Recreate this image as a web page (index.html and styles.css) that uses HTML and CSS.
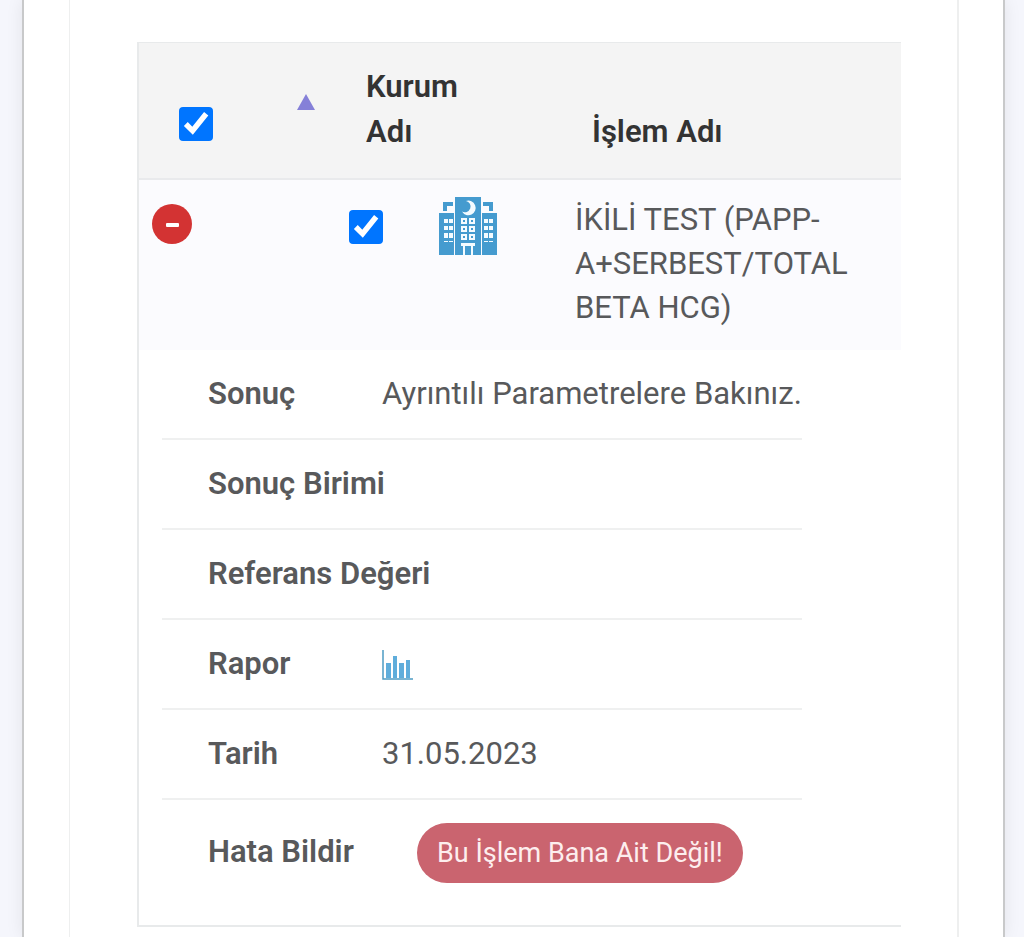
FILE: index.html
```html
<!DOCTYPE html>
<html lang="tr">
<head>
<meta charset="utf-8">
<meta name="viewport" content="width=device-width, initial-scale=1">
<title>Tahlil Sonuçları</title>
<link rel="stylesheet" href="styles.css">
</head>
<body>
<main class="card">
  <section class="panel">
    <table class="results">
      <colgroup>
        <col class="col-control">
        <col class="col-check">
        <col class="col-icon">
        <col>
      </colgroup>
      <thead>
        <tr>
          <th scope="col">
            <div class="select-all">
              <input class="check" type="checkbox" checked aria-label="Tümünü seç">
              <svg class="sort" viewBox="0 0 18 16" aria-hidden="true"><path d="M9 0 18 16H0Z"/></svg>
            </div>
          </th>
          <th scope="col" colspan="2" class="head-org">Kurum<br>Adı</th>
          <th scope="col" class="head-test">İşlem Adı</th>
        </tr>
      </thead>
      <tbody>
        <tr class="row">
          <td class="cell-control">
            <button class="collapse" type="button" aria-label="Detayı kapat">
              <svg viewBox="0 0 40 40" aria-hidden="true"><rect x="14" y="19" width="13" height="4" rx="1"/></svg>
            </button>
          </td>
          <td class="cell-check"><input class="check" type="checkbox" checked aria-label="İşlemi seç"></td>
          <td class="cell-icon">
            <svg class="hospital" viewBox="0 0 58 58" role="img" aria-label="Hastane">
              <path class="blue" d="M16 0H42V58H16ZM0 16H15V58H0ZM43 16H58V58H43ZM4 5H14V9H8V14H4ZM44 5H54V14H50V9H44Z"/>
              <path class="white" d="M27 4A7.300 7.300 0 1 1 23 14.500A5.700 5.700 0 1 0 27 4ZM22 46H36V49H34V58H32V49H26V58H24V49H22Z"/>
              <path class="white" d="M22 21h6v6h-6zM30 21h6v6h-6zM22 29h6v6h-6zM30 29h6v6h-6zM22 37h6v6h-6zM30 37h6v6h-6zM5 22h4v4h-4zM10 22h4v4h-4zM5 29h4v4h-4zM10 29h4v4h-4zM5 36h4v5h-4zM10 36h4v5h-4zM5 44h4v1h-4zM10 44h4v1h-4zM45 22h4v4h-4zM50 22h4v4h-4zM45 29h4v4h-4zM50 29h4v4h-4zM45 36h4v5h-4zM50 36h4v5h-4zM45 44h4v1h-4zM50 44h4v1h-4z"/>
              <path class="blue" d="M24 23h2v2h-2zM32 23h2v2h-2zM24 31h2v2h-2zM32 31h2v2h-2zM24 39h2v2h-2zM32 39h2v2h-2z"/>
            </svg>
          </td>
          <td class="cell-test">İKİLİ TEST (PAPP-<br>A+SERBEST/TOTAL<br>BETA HCG)</td>
        </tr>
        <tr>
          <td colspan="4">
            <dl class="details">
              <div class="detail"><dt>Sonuç</dt><dd>Ayrıntılı Parametrelere Bakınız.</dd></div>
              <div class="detail"><dt>Sonuç Birimi</dt><dd></dd></div>
              <div class="detail"><dt>Referans Değeri</dt><dd></dd></div>
              <div class="detail">
                <dt>Rapor</dt>
                <dd>
                  <button class="report" type="button" aria-label="Raporu aç">
                    <svg viewBox="0 0 32 32" aria-hidden="true">
                      <path class="axis" d="M1 2V31H31"/>
                      <path class="bars" d="M4 15h5v15H4zM11 8h4v22h-4zM17 15h5v15h-5zM24 12h4v18h-4z"/>
                    </svg>
                  </button>
                </dd>
              </div>
              <div class="detail"><dt>Tarih</dt><dd>31.05.2023</dd></div>
              <div class="detail detail-action">
                <dt>Hata Bildir</dt>
                <dd><button class="dispute" type="button">Bu İşlem Bana Ait Değil!</button></dd>
              </div>
            </dl>
          </td>
        </tr>
      </tbody>
    </table>
  </section>
</main>
</body>
</html>
```
FILE: styles.css
```css
* {
  box-sizing: border-box;
}

body {
  margin: 0;
  padding: 0 19px 0 22px;
  background: #f5f6fc;
  color: #58595b;
  font: 400 31px/44px Roboto, "Liberation Sans", sans-serif;
}

.card {
  display: flex;
  min-height: 100vh;
  padding: 0 44px 0 45px;
  background: #fff;
  border: solid #c8c9ca;
  border-width: 0 2px;
  box-shadow: 0 0 16px rgba(0, 0, 0, 0.08);
}

.panel {
  flex: 1;
  padding: 42px 56px 10px 67px;
  border: solid #eeefef;
  border-width: 0 2px 0 1px;
}

.results {
  width: 100%;
  table-layout: fixed;
  border-spacing: 0;
  border: solid #e8eaeb;
  border-width: 1px 0 2px 2px;
}

.col-control {
  width: 192px;
}

.col-check {
  width: 72px;
}

.col-icon {
  width: 148px;
}

th,
td {
  padding: 0;
  text-align: left;
  vertical-align: top;
}

th {
  padding: 21px 0 24px;
  background: #f4f4f4;
  border-bottom: 2px solid #e9eaec;
  color: #333;
  font-weight: 600;
  line-height: 45px;
  vertical-align: bottom;
}

.select-all {
  display: flex;
  gap: 84px;
  align-items: flex-start;
  height: 60px;
  padding-left: 40px;
}

.check {
  flex: none;
  display: block;
  width: 34px;
  height: 34px;
  margin: 0;
  accent-color: #0075ff;
  clip-path: inset(0 round 4px);
}

.select-all .check {
  align-self: center;
}

.sort {
  width: 18px;
  height: 16px;
  fill: #8580d8;
}

.head-org {
  padding-left: 35px;
}

.head-test {
  padding-left: 41px;
}

.row td {
  padding: 18px 0 20px;
  background: #fbfbfe;
}

.row .cell-control {
  padding: 24px 0 0 13px;
}

.row .cell-check {
  padding: 30px 0 0 18px;
}

.row .cell-icon {
  padding: 17px 0 0 36px;
}

.row .cell-test {
  padding-left: 24px;
}

.collapse {
  display: block;
  width: 40px;
  height: 40px;
  padding: 0;
  border: 0;
  border-radius: 50%;
  background: #d33333;
  fill: #fff;
}

.collapse svg,
.hospital,
.report svg {
  display: block;
}

.hospital {
  width: 58px;
  height: 58px;
}

.blue {
  fill: #459bcf;
}

.white {
  fill: #f4fbff;
}

.details {
  margin: 0 99px 0 23px;
}

.detail {
  display: flex;
  align-items: center;
  min-height: 90px;
  padding-left: 46px;
  border-bottom: 2px solid #eff0f0;
}

.detail-action {
  align-items: baseline;
  padding-top: 23px;
  padding-bottom: 42px;
  border-bottom: 0;
}

dt {
  flex: none;
  min-width: 174px;
  font-weight: 600;
  white-space: nowrap;
}

dd {
  margin: 0;
  white-space: nowrap;
}

.report {
  display: block;
  width: 32px;
  height: 32px;
  padding: 0;
  border: 0;
  background: none;
}

.axis {
  fill: none;
  stroke: #4d9cc4;
  stroke-width: 1.500;
}

.bars {
  fill: #5faddb;
}

.dispute {
  display: block;
  height: 60px;
  margin-left: 35px;
  padding: 0 20px;
  border: 0;
  border-radius: 30px;
  background: #ca646f;
  color: #fdeeee;
  font: 400 27px/58px Roboto, "Liberation Sans", sans-serif;
}
```
